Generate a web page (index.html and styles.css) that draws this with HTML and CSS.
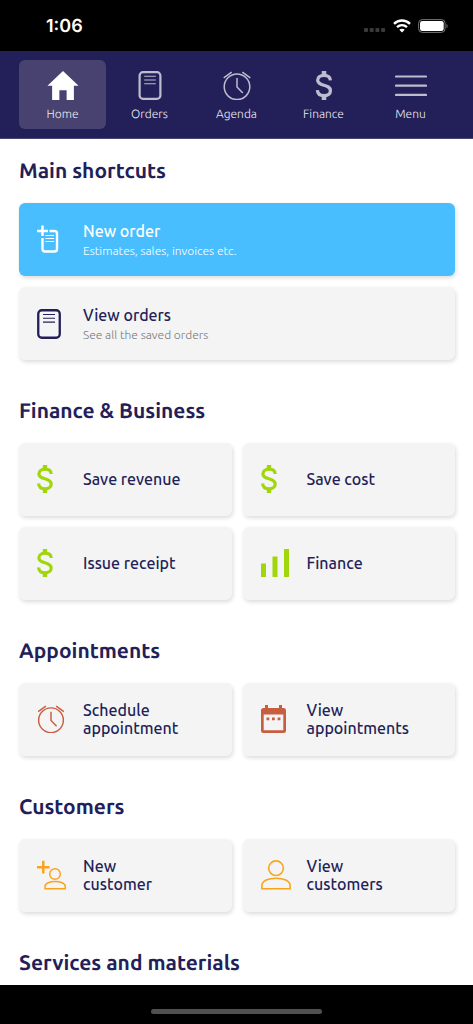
FILE: index.html
```html
<!DOCTYPE html>
<html lang="en">
<head>
<meta charset="utf-8">
<meta name="viewport" content="width=device-width, initial-scale=1">
<title>Home</title>
<link rel="stylesheet" href="styles.css">
</head>
<body>
<svg class="sprite" aria-hidden="true">
  <symbol id="dollar" viewBox="0 0 16 28"><path d="M8 4.500V0M8 23.500V28" stroke="currentColor" stroke-width="4.400" fill="none"/><path d="M14.200 9C14 6 11.500 4.200 8 4.200C4.500 4.200 1.900 6 1.900 8.900C1.900 15.300 14.200 12.200 14.200 19C14.200 22.100 11.500 23.800 8 23.800C4.300 23.800 1.800 21.900 1.600 18.500" stroke="currentColor" stroke-width="3.200" fill="none"/></symbol>
  <symbol id="dollar-left" viewBox="0 0 28 28"><use href="#dollar" width="16" height="28"/></symbol>
  <symbol id="sheet" viewBox="0 0 24 30"><rect x="1.250" y="1.250" width="21.500" height="27.500" rx="3.500" fill="none" stroke="currentColor" stroke-width="2.300"/><path d="M6 5.500H18M6 9.300H18M6 13.100H18" stroke="currentColor" stroke-width="1.100"/></symbol>
  <symbol id="sheet-left" viewBox="0 0 30 30"><use href="#sheet" width="24" height="30"/></symbol>
  <symbol id="alarm" viewBox="0 0 28 29"><g fill="none" stroke="currentColor" stroke-width="1.500"><circle cx="14" cy="15.800" r="12.800"/><path d="M14 7V16L19.800 22M.7 6.800L8.700 1.200M27.300 6.800L19.300 1.200"/></g></symbol>
</svg>
<div class="app">
  <header class="status">
    <time class="clock">1:06</time>
    <div class="signals">
      <svg class="dots" viewBox="0 0 22 5"><g fill="#3a3a3a"><rect x="0" width="4" height="4" rx="1"/><rect x="5.700" width="4" height="4" rx="1"/><rect x="11.400" width="4" height="4" rx="1"/><rect x="17.100" width="4" height="4" rx="1"/></g></svg>
      <svg class="wifi" viewBox="0 0 18 14"><g fill="none" stroke="#fff" stroke-width="2.400"><path d="M1 4.800C5.500 .3 12.500 .3 17 4.800"/><path d="M4 8.200C7 5.500 11 5.500 14 8.200"/></g><path d="M6.300 10.800C7.900 9.500 10.100 9.500 11.700 10.800L9 13.600Z" fill="#fff"/></svg>
      <svg class="battery" viewBox="0 0 30 14"><rect x=".6" y=".6" width="26.500" height="12.800" rx="3.700" fill="none" stroke="#777" stroke-width="1"/><rect x="2" y="2" width="23.700" height="10" rx="2.300" fill="#fff"/><path d="M28.500 4.700C30 5.500 30 8.500 28.500 9.300Z" fill="#777"/></svg>
    </div>
  </header>
  <nav class="tabs">
    <a class="tab active" href="#home"><svg class="glyph" viewBox="0 0 30 28"><path d="M15 0L30 14.300H25.500V28H18.500V18.500H11.500V28H4.500V14.300H0Z" fill="currentColor"/></svg>Home</a>
    <a class="tab" href="#orders"><svg class="glyph"><use href="#sheet"/></svg>Orders</a>
    <a class="tab" href="#agenda"><svg class="glyph"><use href="#alarm"/></svg>Agenda</a>
    <a class="tab" href="#finance"><svg class="glyph"><use href="#dollar"/></svg>Finance</a>
    <a class="tab" href="#menu"><svg class="glyph" viewBox="0 0 32 29"><path d="M1 5.500H31M1 14.700H31M1 23.900H31" stroke="currentColor" stroke-width="2.200" stroke-linecap="round"/></svg>Menu</a>
  </nav>
  <main class="content">
    <section class="group">
      <h2 class="heading">Main shortcuts</h2>
      <div class="cards">
        <button class="card wide primary"><svg class="icon" viewBox="0 0 30 30"><g fill="none" stroke="currentColor"><path d="M5.500 .5V11M0 6H11" stroke-width="2.500"/><path d="M12.500 6H17.500Q20 6 20 8.500V24Q20 26.500 17.500 26.500H8Q5.500 26.500 5.500 24V13" stroke-width="2.400"/><path d="M8.500 10.500H17M8.500 13.500H17M8.500 16.500H17" stroke-width="1.100"/></g></svg><span class="words"><span class="name">New order</span><span class="note">Estimates, sales, invoices etc.</span></span></button>
        <button class="card wide"><svg class="icon"><use href="#sheet-left"/></svg><span class="words"><span class="name">View orders</span><span class="note">See all the saved orders</span></span></button>
      </div>
    </section>
    <section class="group">
      <h2 class="heading">Finance &amp; Business</h2>
      <div class="cards">
        <button class="card"><svg class="icon green small"><use href="#dollar-left"/></svg><span class="name">Save revenue</span></button>
        <button class="card"><svg class="icon green small"><use href="#dollar-left"/></svg><span class="name">Save cost</span></button>
        <button class="card"><svg class="icon green small"><use href="#dollar-left"/></svg><span class="name">Issue receipt</span></button>
        <button class="card"><svg class="icon green small" viewBox="0 0 28 28"><path d="M0 14.500H5V28H0ZM11.500 7.500H16.500V28H11.500ZM23 0H28V28H23Z" fill="currentColor"/></svg><span class="name">Finance</span></button>
      </div>
    </section>
    <section class="group">
      <h2 class="heading">Appointments</h2>
      <div class="cards">
        <button class="card"><svg class="icon rust small"><use href="#alarm"/></svg><span class="name">Schedule appointment</span></button>
        <button class="card"><svg class="icon rust small" viewBox="0 0 28 28"><path fill-rule="evenodd" fill="currentColor" d="M4 0H7V3H18V0H21V3H22.500Q25 3 25 5.500V25.500Q25 28 22.500 28H2.500Q0 28 0 25.500V5.500Q0 3 2.500 3H4ZM2.700 9.500V25.300H22.300V9.500Z"/><path d="M5.500 12.500H8.300V15.300H5.500ZM11 12.500H13.800V15.300H11ZM16.600 12.500H19.400V15.300H16.600Z" fill="currentColor"/></svg><span class="name">View appointments</span></button>
      </div>
    </section>
    <section class="group">
      <h2 class="heading">Customers</h2>
      <div class="cards">
        <button class="card"><svg class="icon amber" viewBox="0 0 30 30"><g fill="none" stroke="currentColor"><path d="M6.300 .8V13.500M0 7.200H12.600" stroke-width="2.500"/><g stroke-width="1.500"><circle cx="18" cy="14" r="5.300"/><path d="M8 28.800V26.500C8 19.800 28.300 19.800 28.300 26.500V28.800Z"/></g></g></svg><span class="name">New<br>customer</span></button>
        <button class="card"><svg class="icon amber" viewBox="0 0 30 30"><g fill="none" stroke="currentColor" stroke-width="1.600"><circle cx="15" cy="8.200" r="7.300"/><path d="M.9 28.800V25.500C.9 15.900 29.100 15.900 29.100 25.500V28.800Z"/></g></svg><span class="name">View<br>customers</span></button>
      </div>
    </section>
    <section class="group">
      <h2 class="heading">Services and materials</h2>
    </section>
  </main>
  <footer class="home-area"><div class="home-bar"></div></footer>
</div>
</body>
</html>
```
FILE: styles.css
```css
* { box-sizing: border-box; }
body { margin: 0; font-family: Ubuntu, "Noto Sans", sans-serif; text-rendering: geometricPrecision; color: #231f58; background: #fff; }
.sprite { display: none; }
.app { display: flex; flex-direction: column; height: 100vh; }

.status { flex: none; height: 51px; padding: 0 25px 0 46px; display: flex; align-items: center; justify-content: space-between; background: #000; color: #fff; }
.clock { padding-top: 2px; font: 600 18px/24px Inter, sans-serif; }
.signals { display: flex; align-items: center; gap: 7px; }
.dots { width: 22px; height: 5px; margin-top: 10px; }
.wifi { width: 18px; height: 14px; }
.battery { width: 30px; height: 14px; }

.tabs { flex: none; display: flex; padding: 9px 19px; background: #231f58; border-bottom: 1px solid #4a4775; }
.tab { flex: 1; display: flex; flex-direction: column; align-items: center; gap: 6px; padding: 11px 0 6px; border-radius: 6px; font-size: 12px; line-height: 17px; font-weight: 300; color: #eeedf4; text-decoration: none; }
.tab.active { background: #474270; }
.glyph { width: 32px; height: 29px; color: #bebccf; }
.active .glyph { color: #fff; }

.content { flex: 1; min-height: 0; overflow: hidden; display: flex; flex-direction: column; gap: 39px; padding: 20px 18px 0 19px; }
.group { flex: none; }
.heading { margin: 0 0 22px; font-size: 21px; line-height: 22px; font-weight: 600; }
.cards { display: grid; grid-template-columns: 1fr 1fr; gap: 11px; }
.card { display: flex; align-items: center; min-height: 73px; padding: 0 12px 2px 18px; border: 0; border-radius: 6px; background: #f4f4f4; box-shadow: 1px 2px 4px #00000024; color: inherit; font: inherit; text-align: left; cursor: pointer; }
.wide { grid-column: 1 / -1; padding-bottom: 0; }
.primary { background: #48beff; color: #fff; }
.icon { flex: none; width: 30px; height: 30px; margin-right: 16px; overflow: visible; }
.icon.small { width: 28px; height: 28px; margin-right: 18px; }
.green { color: #a0d60a; }
.rust { color: #c85e40; }
.amber { color: #faa41e; }
.words { display: flex; flex-direction: column; padding-top: 2px; }
.name { font-size: 16px; line-height: 18px; font-weight: 500; }
.note { margin-top: 3px; font-size: 12px; line-height: 16px; font-weight: 300; color: #777; }
.primary .note { color: #fff; }

.home-area { flex: none; height: 39px; padding-top: 24px; background: #000; }
.home-bar { width: 36%; height: 5px; margin: 0 auto; border-radius: 3px; background: #505050; }
```
